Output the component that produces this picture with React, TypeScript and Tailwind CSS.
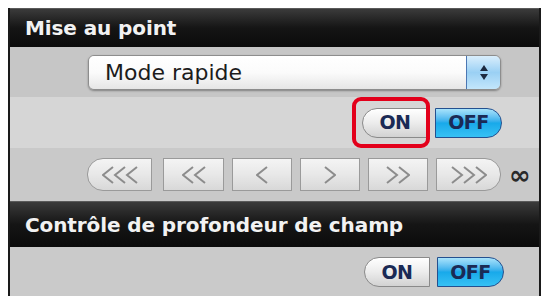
import React from 'react';

const navSteps = [
  { n: 3, dir: -1, w: 'w-[65px]', extra: 'mr-[3px] rounded-l-[16px]' },
  { n: 2, dir: -1, w: 'w-[61px]', extra: '' },
  { n: 1, dir: -1, w: 'w-[60px]', extra: '' },
  { n: 1, dir: 1, w: 'w-[60px]', extra: '' },
  { n: 2, dir: 1, w: 'w-[60px]', extra: '' },
  { n: 3, dir: 1, w: 'w-[65px]', extra: 'rounded-r-[16px]' },
];

function Chevrons({ n, dir }: { n: number; dir: number }) {
  const step = 12;
  const cw = 10;
  const width = cw + (n - 1) * step + 2;
  return (
    <svg width={width} height="20" viewBox={`0 0 ${width} 20`}>
      {Array.from({ length: n }).map((_, i) => {
        const x = 1 + i * step;
        const pts =
          dir < 0
            ? `${x + cw},2 ${x},10 ${x + cw},18`
            : `${x},2 ${x + cw},10 ${x},18`;
        return <polyline key={i} points={pts} fill="none" stroke="#8c8c8c" strokeWidth="2" />;
      })}
    </svg>
  );
}

function PanelHeader({ title, height }: { title: string; height: string }) {
  return (
    <div
      className={`${height} flex items-center border-t border-[#5a5a5a] bg-gradient-to-b from-[#3b3b3b] via-[#151515] to-[#0b0b0b] pl-[15px] text-[20px] font-bold tracking-[-0.1px] text-[#f2f2f2]`}
    >
      {title}
    </div>
  );
}

function OnOff() {
  return (
    <div className="flex items-center gap-[7px] text-[19px] font-bold tracking-[-0.5px] text-[#1a2a55]">
      <div className="flex h-[30px] w-[66px] items-center justify-center rounded-l-[15px] border border-[#8a8a8a] bg-gradient-to-b from-[#ffffff] via-[#ececec] to-[#d2d2d2] shadow-[inset_0_1px_0_#fff]">
        ON
      </div>
      <div className="flex h-[30px] w-[67px] items-center justify-center rounded-r-[15px] border border-[#24508f] bg-gradient-to-b from-[#a7e3fb] via-[#17a9ea] to-[#36c1f4]">
        OFF
      </div>
    </div>
  );
}

export default function App() {
  return (
    <div className="h-[296px] w-[542px] overflow-hidden bg-white pl-[8px] pt-[8px] font-['DejaVu_Sans',sans-serif]">
      <div className="relative w-[533px] border-x-2 border-[#1a1a1a]">
        <PanelHeader title="Mise au point" height="h-[39px]" />

        {/* Select */}
        <div className="flex h-[50px] items-center justify-end bg-[#c6c6c6] pr-[38px]">
          <div className="flex h-[35px] w-[413px] overflow-hidden rounded-[6px] border border-[#8d8d8d] shadow-[0_1px_2px_rgba(0,0,0,0.35)]">
            <div className="flex flex-1 items-center bg-gradient-to-b from-[#ffffff] via-[#fbfbfb] to-[#e6e6e6] pl-[16px] text-[22px] text-[#1c1c1c]">
              Mode rapide
            </div>
            <div className="flex w-[34px] flex-col items-center justify-center gap-[3px] border-l border-[#4c77b3] bg-gradient-to-b from-[#d9eefc] via-[#9ad0f4] to-[#c3e6fb]">
              <svg width="8" height="6" viewBox="0 0 8 6">
                <path d="M4 0 L8 6 L0 6 Z" fill="#1d2a40" />
              </svg>
              <svg width="8" height="6" viewBox="0 0 8 6">
                <path d="M0 0 L8 0 L4 6 Z" fill="#1d2a40" />
              </svg>
            </div>
          </div>
        </div>

        {/* ON / OFF */}
        <div className="flex h-[51px] items-center justify-end bg-[#d6d6d6] pr-[37px]">
          <OnOff />
        </div>

        {/* Focus steps */}
        <div className="flex h-[53px] items-center justify-end bg-[#c9c9c9] pr-[6px]">
          <div className="flex items-center gap-[8px]">
            {navSteps.map((s, i) => (
              <div
                key={i}
                className={`${s.w} ${s.extra} flex h-[33px] items-center justify-center border border-[#9a9a9a] bg-gradient-to-b from-[#f4f4f4] via-[#e8e8e8] to-[#d8d8d8]`}
              >
                <Chevrons n={s.n} dir={s.dir} />
              </div>
            ))}
            <span className="w-[24px] text-[26px] font-bold leading-none text-[#2a2a2a]">∞</span>
          </div>
        </div>

        <PanelHeader title="Contrôle de profondeur de champ" height="h-[46px]" />

        <div className="flex h-[50px] items-center justify-end bg-[#cacaca] pr-[35px]">
          <OnOff />
        </div>

        {/* annotation */}
        <div className="absolute left-[342px] top-[89px] h-[51px] w-[78px] rounded-[9px] border-[4px] border-[#e3001b]" />
      </div>
    </div>
  );
}
